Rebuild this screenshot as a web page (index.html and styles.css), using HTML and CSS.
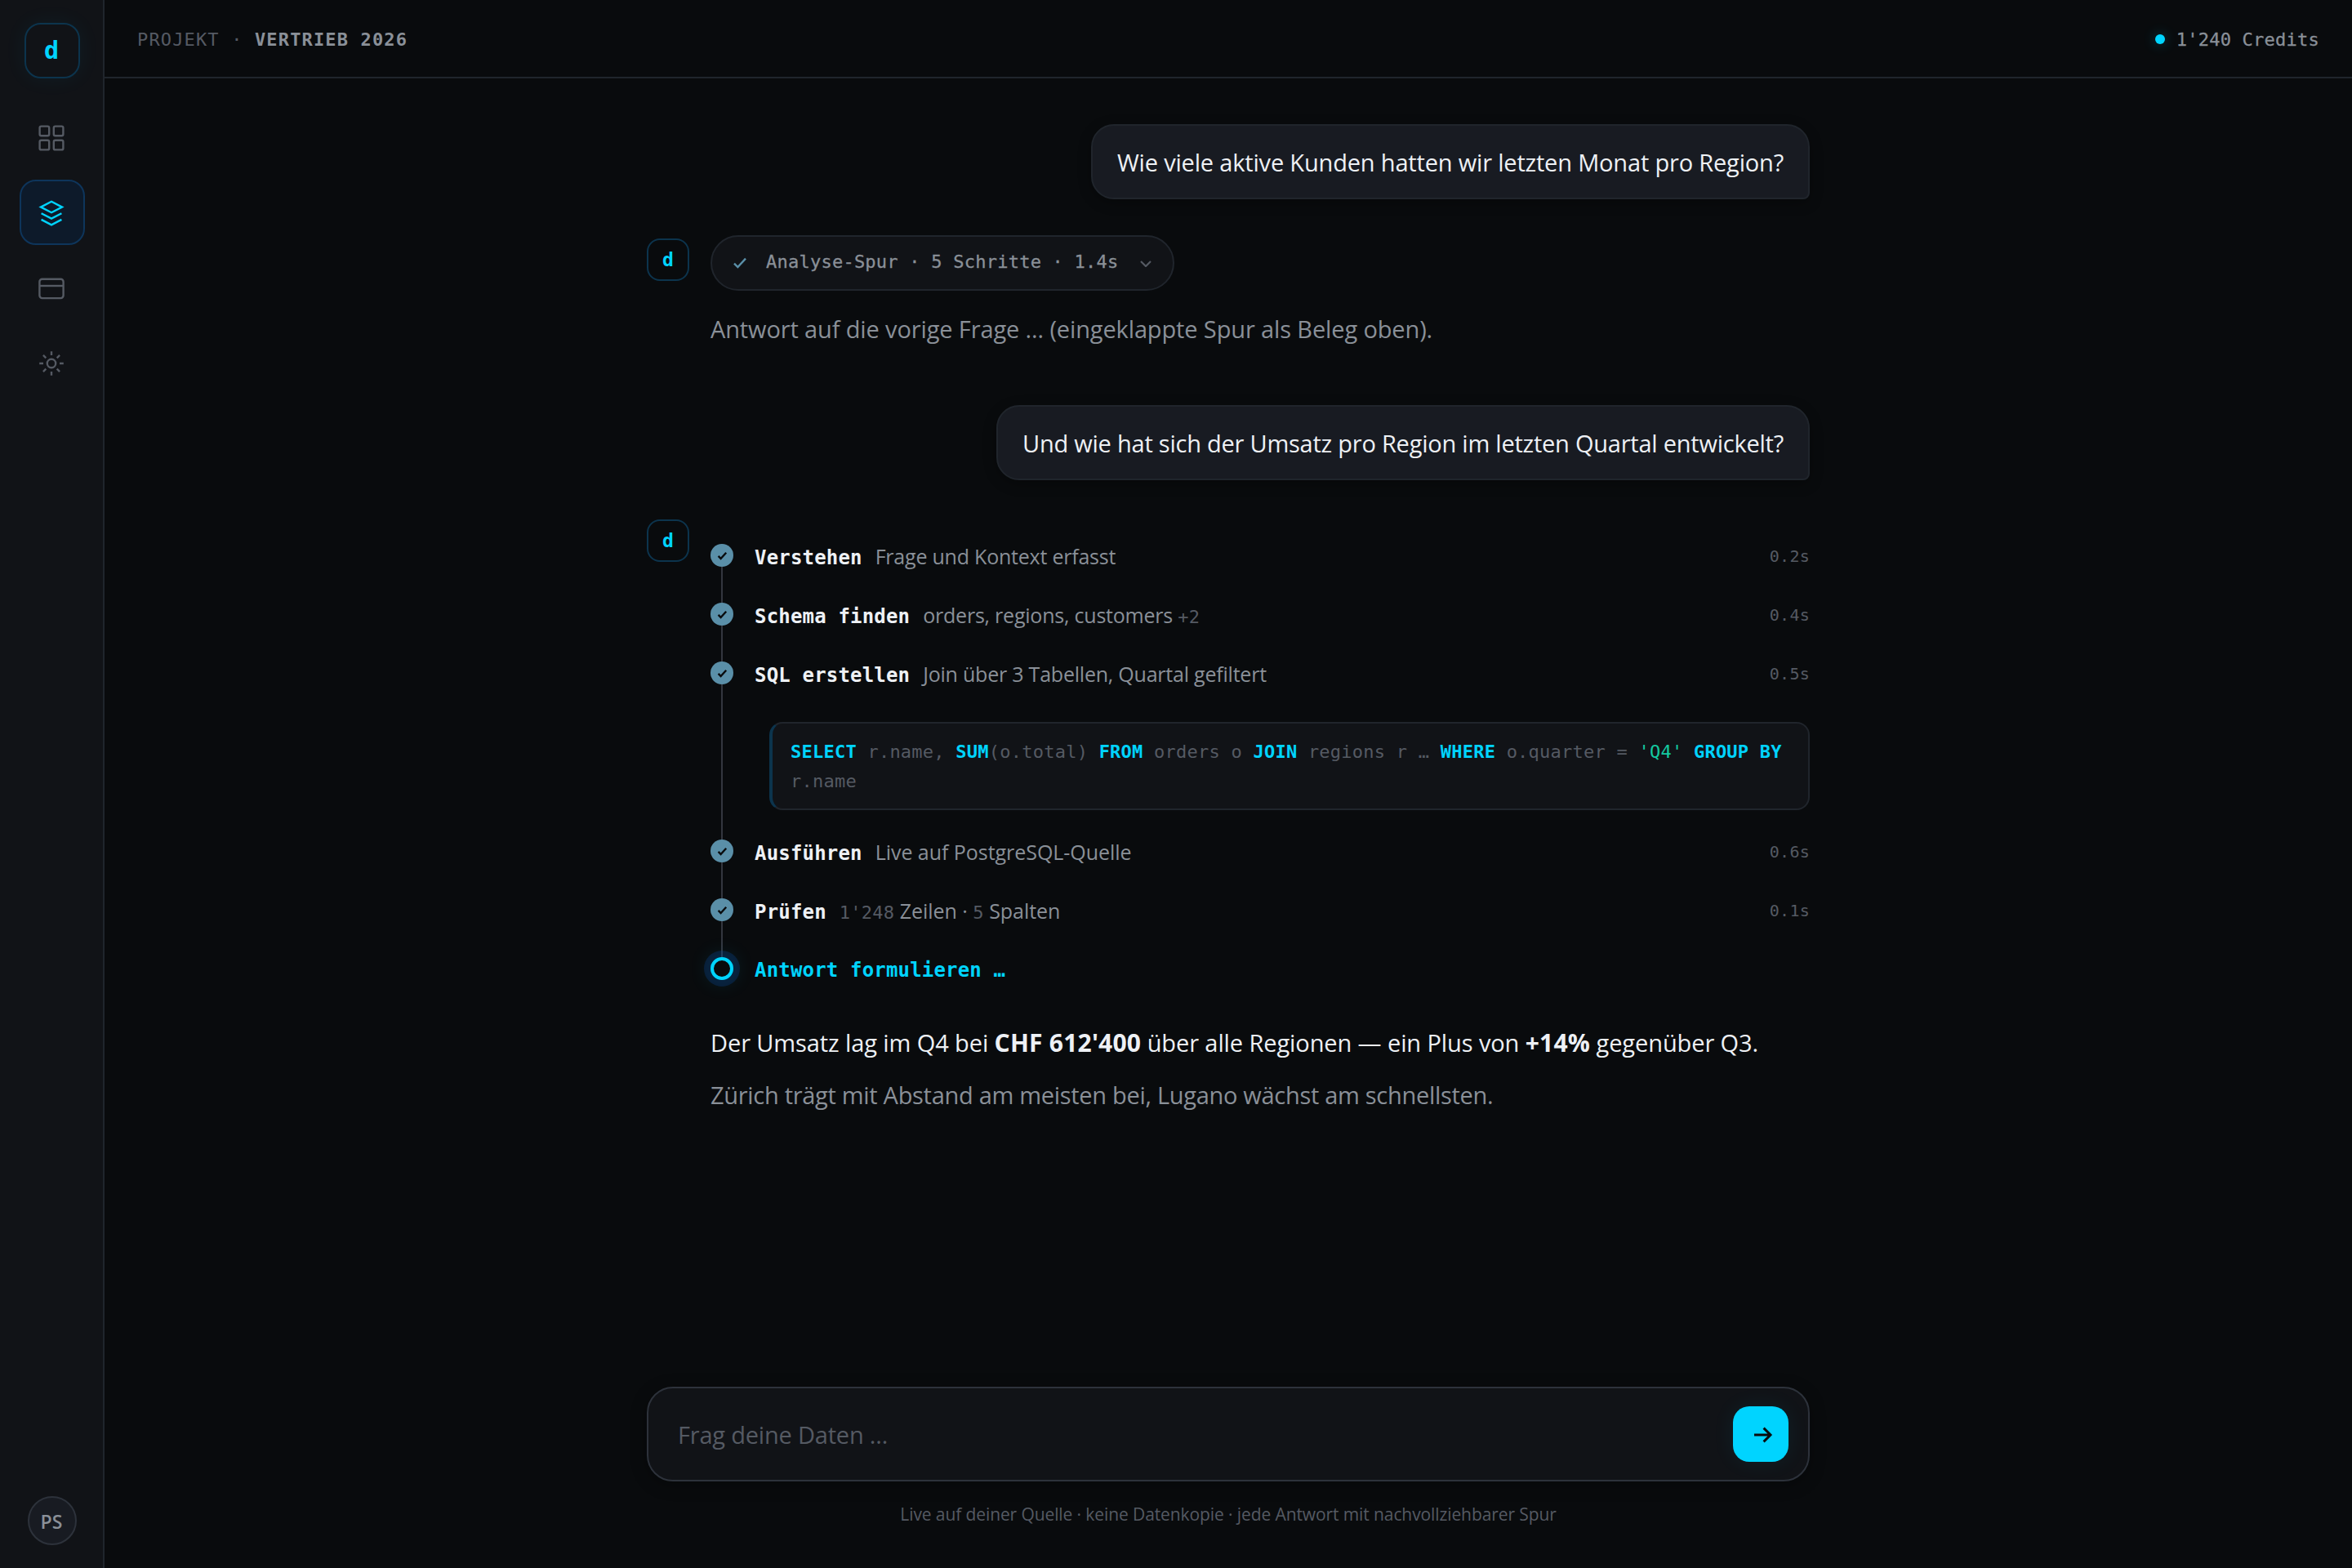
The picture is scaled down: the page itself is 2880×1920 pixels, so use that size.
FILE: index.html
```html
<!DOCTYPE html>
<html lang="de">
<head>
<meta charset="utf-8">
<title>Projekt · Vertrieb 2026</title>
<link rel="stylesheet" href="styles.css">
</head>
<body>
<div class="app">
  <aside class="sidebar">
    <div class="logo">d</div>
    <nav class="nav">
      <a class="nav-item"><svg class="icon" viewBox="0 0 40 40"><rect x="5.6" y="5.6" width="11.6" height="11.6" rx="2"/><rect x="22.8" y="5.6" width="11.6" height="11.6" rx="2"/><rect x="5.6" y="22.8" width="11.6" height="11.6" rx="2"/><rect x="22.8" y="22.8" width="11.6" height="11.6" rx="2"/></svg></a>
      <a class="nav-item active"><svg class="icon" viewBox="0 0 40 40"><path d="M20 5.8 33 12.6 20 19.2 7 12.6Z"/><path d="M7.6 20.2 20 26.6 32.4 20.2"/><path d="M7.6 27.9 20 34.4 32.4 27.9"/></svg></a>
      <a class="nav-item"><svg class="icon" viewBox="0 0 40 40"><rect x="5.4" y="8.7" width="29.2" height="23.4" rx="3.3"/><path d="M5.4 17H34.6"/></svg></a>
      <a class="nav-item"><svg class="icon" viewBox="0 0 40 40"><circle cx="20" cy="20" r="5.2"/><path d="M20 5.2V10M20 30v4.8M5.2 20H10M30 20h4.8M9.9 9.9l3.4 3.4M26.7 26.7l3.4 3.4M9.9 30.1l3.4-3.4M26.7 13.3l3.4-3.4"/></svg></a>
    </nav>
    <div class="user">PS</div>
  </aside>
  <main class="main">
    <header class="topbar">
      <div class="crumb">PROJEKT · <b>VERTRIEB 2026</b></div>
      <div class="credits"><i class="dot"></i><span>1'240 Credits</span></div>
    </header>
    <section class="thread">
      <div class="bubble">Wie viele aktive Kunden hatten wir letzten Monat pro Region?</div>
      <div class="reply">
        <div class="avatar">d</div>
        <div class="content">
          <div class="chip"><svg class="chip-check" viewBox="0 0 16 14"><path d="M1 7.6 5.4 12 15 1.6"/></svg><span>Analyse-Spur · 5 Schritte · 1.4s</span><svg class="chip-caret" viewBox="0 0 14 8"><path d="M1 1 7 7 13 1"/></svg></div>
          <p class="answer soft first">Antwort auf die vorige Frage … (eingeklappte Spur als Beleg oben).</p>
        </div>
      </div>
      <div class="bubble long">Und wie hat sich der Umsatz pro Region im letzten Quartal entwickelt?</div>
      <div class="reply">
        <div class="avatar">d</div>
        <div class="content">
          <ol class="steps">
            <li class="step">
              <div class="rail"><i class="mark"><svg viewBox="0 0 28 28"><path d="M9.6 14.9 12.6 18 19.2 10.8"/></svg></i></div>
              <div class="body"><div class="head"><div class="label"><b>Verstehen</b><span class="desc">Frage und Kontext erfasst</span></div><time>0.2s</time></div></div>
            </li>
            <li class="step">
              <div class="rail"><i class="mark"><svg viewBox="0 0 28 28"><path d="M9.6 14.9 12.6 18 19.2 10.8"/></svg></i></div>
              <div class="body"><div class="head"><div class="label"><b>Schema finden</b><span class="desc">orders, regions, customers <span class="num">+2</span></span></div><time>0.4s</time></div></div>
            </li>
            <li class="step">
              <div class="rail"><i class="mark"><svg viewBox="0 0 28 28"><path d="M9.6 14.9 12.6 18 19.2 10.8"/></svg></i></div>
              <div class="body">
                <div class="head"><div class="label"><b>SQL erstellen</b><span class="desc">Join über 3 Tabellen, Quartal gefiltert</span></div><time>0.5s</time></div>
                <code class="sql"><b>SELECT</b> r.name, <b>SUM</b>(o.total) <b>FROM</b> orders o <b>JOIN</b> regions r … <b>WHERE</b> o.quarter = <em>'Q4'</em> <b>GROUP BY</b> r.name</code>
              </div>
            </li>
            <li class="step">
              <div class="rail"><i class="mark"><svg viewBox="0 0 28 28"><path d="M9.6 14.9 12.6 18 19.2 10.8"/></svg></i></div>
              <div class="body"><div class="head"><div class="label"><b>Ausführen</b><span class="desc wide">Live auf PostgreSQL-Quelle</span></div><time>0.6s</time></div></div>
            </li>
            <li class="step">
              <div class="rail"><i class="mark"><svg viewBox="0 0 28 28"><path d="M9.6 14.9 12.6 18 19.2 10.8"/></svg></i></div>
              <div class="body"><div class="head"><div class="label"><b>Prüfen</b><span class="desc wide"><span class="num">1'248</span> Zeilen · <span class="num">5</span> Spalten</span></div><time>0.1s</time></div></div>
            </li>
            <li class="step current">
              <div class="rail"><i class="mark"></i></div>
              <div class="body"><div class="head"><div class="label"><b>Antwort formulieren …</b></div></div></div>
            </li>
          </ol>
          <p class="answer">Der Umsatz lag im Q4 bei <strong>CHF 612'400</strong> über alle Regionen — ein Plus von <strong>+14%</strong> gegenüber Q3.</p>
          <p class="answer soft tight">Zürich trägt mit Abstand am meisten bei, Lugano wächst am schnellsten.</p>
        </div>
      </div>
    </section>
    <footer class="dock">
      <div class="composer"><span class="placeholder">Frag deine Daten …</span><button class="send"><svg viewBox="0 0 40 40"><path d="M11 20H31M22.6 11.6 31 20l-8.4 8.4"/></svg></button></div>
      <p class="note">Live auf deiner Quelle · keine Datenkopie · jede Antwort mit nachvollziehbarer Spur</p>
    </footer>
  </main>
</div>
</body>
</html>
```
FILE: styles.css
```css
:root {
  --bg: #090b0d;
  --panel: #111317;
  --raised: #181b22;
  --line: #20252c;
  --line-strong: #2d323b;
  --text: #eef1f5;
  --muted: #8a9098;
  --dim: #555a63;
  --cyan: #00d4ff;
  --cyan-line: #0c344d;
  --sans: "Open Sans", "Noto Sans", sans-serif;
  --mono: "DejaVu Sans Mono", "Liberation Mono", monospace;
}
* { box-sizing: border-box; margin: 0; padding: 0; }
body { background: var(--bg); color: var(--text); font-family: var(--sans); }
.app { display: grid; grid-template-columns: 128px 1fr; width: 2880px; height: 1920px; overflow: hidden; }
svg { fill: none; stroke: currentColor; }

.sidebar { display: flex; flex-direction: column; align-items: center; padding: 28px 0 28px 2px; background: var(--panel); border-right: 2px solid var(--line); }
.logo { display: flex; align-items: center; justify-content: center; width: 68px; height: 68px; padding-right: 2px; border: 2px solid var(--cyan-line); border-radius: 20px; color: var(--cyan); font: 700 30px/64px var(--mono); box-shadow: 0 0 28px rgba(0, 212, 255, .06); }
.nav { display: flex; flex-direction: column; gap: 12px; margin-top: 32px; flex: 1; }
.nav-item { display: flex; align-items: center; justify-content: center; width: 80px; height: 80px; padding: 2px 2px 0 0; border: 2px solid transparent; border-radius: 20px; color: var(--dim); }
.nav-item.active { background: #0d1a2a; border-color: #0e355b; color: var(--cyan); }
.icon { width: 40px; height: 40px; stroke-width: 2.4; stroke-linecap: butt; }
.user { display: flex; align-items: center; justify-content: center; width: 60px; height: 60px; padding: 2px 2px 0 0; border: 2px solid var(--line-strong); border-radius: 50%; background: var(--raised); color: var(--muted); font-size: 23px; font-weight: 600; }

.main { display: flex; flex-direction: column; min-width: 0; }
.topbar { display: flex; align-items: center; justify-content: space-between; height: 96px; padding: 4px 40px 0; border-bottom: 2px solid var(--line); font: 22px/32px var(--mono); }
.crumb { color: var(--dim); letter-spacing: 1.15px; }
.crumb b { color: var(--muted); }
.credits { display: flex; align-items: center; gap: 14px; color: var(--muted); letter-spacing: .24px; -webkit-text-stroke: .3px; }
.dot { width: 12px; height: 12px; margin-top: -3px; border-radius: 50%; background: var(--cyan); box-shadow: 0 0 16px rgba(0, 212, 255, .3); }

.thread { display: flex; flex-direction: column; gap: 44px; flex: 1; width: 1424px; margin: 0 auto; padding-top: 56px; }
.bubble { align-self: flex-end; height: 92px; padding: 1px 30px 0; border: 2px solid var(--line); border-radius: 28px 28px 8px 28px; background: var(--raised); font-size: 29px; line-height: 88px; letter-spacing: -.18px; box-shadow: 0 4px 16px rgba(0, 0, 0, .3); }
.bubble.long { letter-spacing: -.23px; }
.reply { display: flex; gap: 26px; }
.avatar { flex: none; display: flex; align-items: center; justify-content: center; width: 52px; height: 52px; margin-top: 4px; border: 2px solid var(--cyan-line); border-radius: 16px; color: var(--cyan); font: 700 23px/48px var(--mono); }
.content { flex: 1; min-width: 0; }
.chip { display: flex; align-items: center; width: 568px; height: 68px; padding: 0 26px 2px; border: 2px solid var(--line); border-radius: 34px; background: var(--panel); color: var(--muted); font: 22px/32px var(--mono); letter-spacing: .24px; -webkit-text-stroke: .3px; }
.chip-check { width: 16px; height: 14px; margin: 2px 24px 0 0; color: #5a8fa8; stroke-width: 2.4; }
.chip-caret { width: 14px; height: 8px; margin: 3px 0 0 auto; color: var(--dim); stroke-width: 2.2; }
.answer { margin-top: 16px; font-size: 29px; line-height: 48px; letter-spacing: -.1px; }
.answer.first { margin: 23px 0 25px; letter-spacing: -.13px; }
.answer.tight { letter-spacing: -.3px; }
.answer strong { font-size: 30px; letter-spacing: .22px; }
.soft { color: var(--muted); }

.steps { list-style: none; padding: 12px 0 15px; }
.step { display: flex; gap: 26px; }
.rail { display: flex; flex-direction: column; align-items: center; width: 28px; }
.rail::before, .rail::after { content: ""; width: 2px; background: #33363f; }
.rail::before { height: 22px; }
.rail::after { flex: 1; }
.step:first-child .rail::before, .step:last-child .rail::after { background: none; }
.mark { width: 28px; height: 28px; border-radius: 50%; background: #5a8fa8; color: var(--bg); }
.mark svg { display: block; width: 28px; height: 28px; stroke-width: 2.4; }
.current .mark { border: 4px solid var(--cyan); background: var(--bg); box-shadow: 0 0 0 8px rgba(10, 70, 150, .3), 0 0 28px rgba(0, 212, 255, .2); }
.body { flex: 1; }
.head { display: flex; align-items: center; justify-content: space-between; height: 72px; padding-top: 2px; }
.current .head { padding-top: 4px; }
.label { display: flex; align-items: baseline; gap: 16px; height: 40px; line-height: 40px; }
.label b { font-family: var(--mono); font-size: 24px; letter-spacing: .18px; white-space: nowrap; }
.desc { color: var(--muted); font-size: 25px; letter-spacing: -.22px; }
.desc.wide { letter-spacing: -.04px; }
.num { font-family: var(--mono); font-size: 22px; line-height: 1; letter-spacing: .24px; color: var(--dim); }
time { font: 20px/32px var(--mono); letter-spacing: .26px; color: var(--dim); }
.current b { color: var(--cyan); }
.sql { display: block; margin: 24px 0 14px 18px; padding: 17px 22px 15px; border: 2px solid var(--line); border-left: 4px solid var(--cyan-line); border-radius: 16px; background: var(--panel); color: var(--dim); font: 22px/36px var(--mono); letter-spacing: .24px; }
.sql b { color: var(--cyan); }
.sql em { color: #14c9a0; font-style: normal; }

.dock { width: 1424px; margin: 0 auto; height: 222px; }
.composer { display: flex; align-items: center; justify-content: space-between; height: 116px; padding: 0 24px 0 36px; border: 2px solid var(--line-strong); border-radius: 32px; background: var(--panel); box-shadow: 0 4px 20px rgba(0, 0, 0, .3); }
.placeholder { color: var(--dim); font-size: 29px; letter-spacing: -.2px; }
.send { display: flex; align-items: center; justify-content: center; width: 68px; height: 68px; border: 0; border-radius: 20px; background: var(--cyan); color: var(--bg); box-shadow: 0 0 28px rgba(0, 212, 255, .07); }
.send svg { width: 40px; height: 40px; margin: 2px 0 0 2px; stroke-width: 3; }
.note { margin-top: 23px; text-align: center; color: var(--dim); font-size: 21px; line-height: 34px; letter-spacing: -.1px; }
```
